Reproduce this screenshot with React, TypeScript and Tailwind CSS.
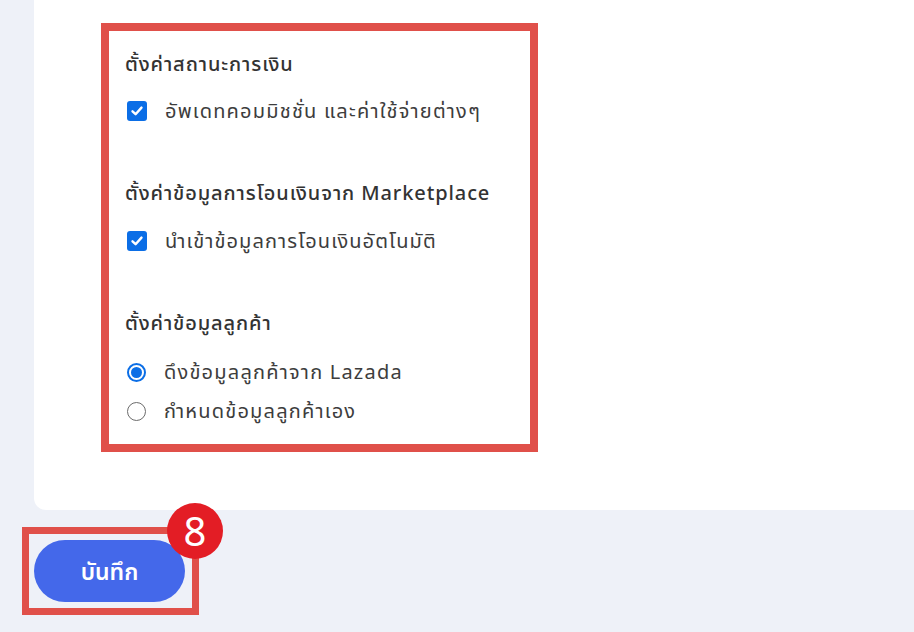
import React from "react";

const font = { fontFamily: '"Noto Sans", "Noto Sans Thai", "Noto Sans CJK SC", sans-serif' };

function Check() {
  return (
    <span className="flex h-[20px] w-[20px] shrink-0 items-center justify-center rounded-[3px] bg-[#0b6ee6]">
      <svg width="14" height="14" viewBox="0 0 14 14" fill="none">
        <path d="M2.5 7.3 L5.6 10.2 L11.5 3.6" stroke="white" strokeWidth="2.4" strokeLinecap="round" strokeLinejoin="round" />
      </svg>
    </span>
  );
}

function Radio({ on }: { on?: boolean }) {
  return on ? (
    <span className="flex h-[19px] w-[19px] shrink-0 items-center justify-center rounded-full border-[2px] border-[#0b6ee6] bg-white">
      <span className="h-[11px] w-[11px] rounded-full bg-[#0b6ee6]" />
    </span>
  ) : (
    <span className="h-[19px] w-[19px] shrink-0 rounded-full border-[1.5px] border-[#6b6b6b] bg-white" />
  );
}

export default function App() {
  return (
    <div className="min-h-[632px] w-[914px] overflow-hidden bg-[#eef1f8]" style={font}>
      <div className="ml-[34px] h-[510px] rounded-bl-xl bg-white pl-[67px] pt-[23px]">
        <div className="flex h-[429px] w-[437px] flex-col border-[8px] border-[#e0504a] bg-white pl-[16px] pt-[19px]">
          <div className="text-[20px] font-medium leading-[28px] tracking-[0.9px] text-[#333]">ตั้งค่าสถานะการเงิน</div>
          <div className="ml-[2px] mt-[19px] flex items-center gap-[18px] text-[20px] leading-[28px] tracking-[1.2px] text-[#3d3d3d]">
            <Check />
            <span>อัพเดทคอมมิชชั่น และค่าใช้จ่ายต่างๆ</span>
          </div>
          <div className="mt-[54px] text-[20px] font-medium leading-[28px] tracking-[0.9px] text-[#333]">ตั้งค่าข้อมูลการโอนเงินจาก Marketplace</div>
          <div className="ml-[2px] mt-[20px] flex items-center gap-[18px] text-[20px] leading-[28px] tracking-[1.1px] text-[#3d3d3d]">
            <Check />
            <span>นำเข้าข้อมูลการโอนเงินอัตโนมัติ</span>
          </div>
          <div className="mt-[54px] text-[20px] font-medium leading-[28px] tracking-[0.9px] text-[#333]">ตั้งค่าข้อมูลลูกค้า</div>
          <div className="ml-[2px] mt-[21px] flex items-center gap-[18px] text-[20px] leading-[28px] tracking-[1.2px] text-[#3d3d3d]">
            <Radio on />
            <span>ดึงข้อมูลลูกค้าจาก Lazada</span>
          </div>
          <div className="ml-[2px] mt-[11px] flex items-center gap-[18px] text-[20px] leading-[28px] tracking-[1.2px] text-[#3d3d3d]">
            <Radio />
            <span>กำหนดข้อมูลลูกค้าเอง</span>
          </div>
        </div>
      </div>
      <div className="pl-[22px] pt-[17px]">
        <div className="relative inline-block">
          <div className="border-[7px] border-[#e0504a] pb-[6px] pl-[5px] pr-[7px] pt-[6px]">
            <button className="flex h-[62px] w-[151px] items-center justify-center rounded-full bg-[#4468ea] text-[23px] font-semibold text-white">
              บันทึก
            </button>
          </div>
          <div className="absolute left-[145px] top-[-24px] flex h-[56px] w-[56px] items-center justify-center rounded-full bg-[#e31d25] text-[40px] leading-none text-white">
            8
          </div>
        </div>
      </div>
    </div>
  );
}
